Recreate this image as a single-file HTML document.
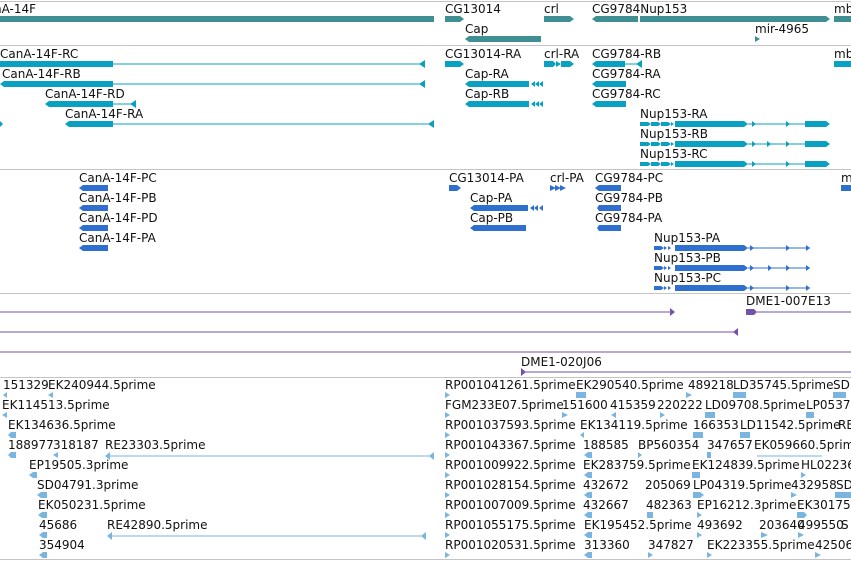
<!DOCTYPE html>
<html><head><meta charset="utf-8"><style>
html,body{margin:0;padding:0;background:#fff;width:851px;height:561px;overflow:hidden}
svg{display:block}
text{font-family:"DejaVu Sans","Liberation Sans",sans-serif;font-size:12px;fill:#111}
</style></head><body>
<svg width="851" height="561" viewBox="0 0 851 561" xmlns="http://www.w3.org/2000/svg">
<g stroke="#c4c4c4" stroke-width="1">
<line x1="0" y1="1.5" x2="851" y2="1.5"/><line x1="0" y1="45.5" x2="851" y2="45.5"/>
<line x1="0" y1="169.5" x2="851" y2="169.5"/><line x1="0" y1="293.5" x2="851" y2="293.5"/>
<line x1="0" y1="377.5" x2="851" y2="377.5"/><line x1="0" y1="559.5" x2="851" y2="559.5"/>
</g>
<!-- Track 1 genes -->
<g fill="#3f8f93">
<rect x="0" y="16" width="434" height="6"/>
<polygon points="445,16 460,16 464,19 460,22 445,22"/>
<polygon points="544,16 570,16 574,19 570,22 544,22"/>
<polygon points="596,16 638,16 638,22 596,22 592,19"/>
<polygon points="640,16 826,16 830,19 826,22 640,22"/>
<rect x="834" y="16" width="17" height="6"/>
<polygon points="469,36 541,36 541,42 469,42 465,39"/>
<polygon points="755,36 760,39 755,42"/>
</g>
<text x="-6" y="13">nA-14F</text><text x="445" y="13">CG13014</text><text x="544" y="13">crl</text>
<text x="592" y="13">CG9784Nup153</text><text x="834" y="13">mb</text>
<text x="465" y="33">Cap</text><text x="755" y="33">mir-4965</text>
<!-- Track 2 -->
<g fill="#0aa0c1" stroke="none">
<rect x="0" y="61" width="113" height="6"/><rect x="113" y="63.5" width="312" height="1"/><polygon points="425,60 425,68 419,64"/>
<polygon points="4,81 113,81 113,87 4,87 0,84"/><rect x="113" y="83.5" width="312" height="1"/><polygon points="425,80 425,88 419,84"/>
<polygon points="49,101 113,101 113,107 49,107 45,104"/><rect x="113" y="103.5" width="22" height="1"/><polygon points="136,100 136,108 130,104"/>
<polygon points="69,121 113,121 113,127 69,127 65,124"/><rect x="113" y="123.5" width="321" height="1"/><polygon points="434,120 434,128 428,124"/>
<polygon points="0,121 3,124 0,127"/>
<polygon points="445,61 460,61 464,64 460,67 445,67"/>
<polygon points="544,61 553,61 556,64 553,67 544,67"/><polygon points="556,61 561,64 556,67"/><polygon points="561,61 570,61 574,64 570,67 561,67"/>
<polygon points="596,61 625,61 625,67 596,67 592,64"/><rect x="625" y="63.5" width="16" height="1"/><polygon points="642,60 642,68 636,64"/>
<rect x="834" y="61" width="17" height="6"/>
<polygon points="469,81 529,81 529,87 469,87 465,84"/><polygon points="535,81 535,87 531,84"/><polygon points="539,81 539,87 535,84"/><polygon points="543,81 543,87 539,84"/>
<polygon points="469,101 529,101 529,107 469,107 465,104"/><polygon points="535,101 535,107 531,104"/><polygon points="539,101 539,107 535,104"/><polygon points="543,101 543,107 539,104"/>
<polygon points="596,81 626,81 626,87 596,87 592,84"/>
<polygon points="596,101 626,101 626,107 596,107 592,104"/>
</g>
<g fill="#0aa0c1">
<g id="nup">
<polygon points="640,122 648,122 651,124 648,126 640,126"/><polygon points="651,122 658,122 661,124 658,126 651,126"/><polygon points="661,122 668,122 671,124 668,126 661,126"/><polygon points="671,122 674,124 671,126"/>
<polygon points="675,121 744,121 748,124 744,127 675,127"/><rect x="748" y="123.5" width="57" height="1"/><polygon points="752,121 756,124 752,127"/><polygon points="786,121 790,124 786,127"/>
<polygon points="805,121 826,121 830,124 826,127 805,127"/>
</g>
<use href="#nup" y="20"/><use href="#nup" y="40"/>
<polygon points="767,141 771,144 767,147"/>
</g>
<text x="0" y="58">CanA-14F-RC</text><text x="445" y="58">CG13014-RA</text><text x="544" y="58">crl-RA</text><text x="592" y="58">CG9784-RB</text><text x="834" y="58">mb</text>
<text x="2" y="78">CanA-14F-RB</text><text x="465" y="78">Cap-RA</text><text x="592" y="78">CG9784-RA</text>
<text x="45" y="98">CanA-14F-RD</text><text x="465" y="98">Cap-RB</text><text x="592" y="98">CG9784-RC</text>
<text x="65" y="118">CanA-14F-RA</text><text x="640" y="118">Nup153-RA</text>
<text x="640" y="138">Nup153-RB</text><text x="640" y="158">Nup153-RC</text>
<!-- Track 3 -->
<g fill="#2f6fcf">
<polygon points="83,185 108,185 108,191 83,191 79,188"/>
<polygon points="83,205 108,205 108,211 83,211 79,208"/>
<polygon points="83,225 108,225 108,231 83,231 79,228"/>
<polygon points="83,245 108,245 108,251 83,251 79,248"/>
<polygon points="449,185 457,185 461,188 457,191 449,191"/>
<polygon points="550,185 556,188 550,191"/><polygon points="555,185 561,188 555,191"/><polygon points="560,185 566,188 560,191"/>
<polygon points="599,185 621,185 621,191 599,191 595,188"/>
<polygon points="599,205 621,205 621,211 599,211 597,208"/>
<polygon points="599,225 621,225 621,231 599,231 597,228"/>
<polygon points="474,205 528,205 528,211 474,211 470,208"/><polygon points="534,205 534,211 530,208"/><polygon points="538,205 538,211 534,208"/><polygon points="543,205 543,211 539,208"/>
<polygon points="474,225 526,225 526,231 474,231 470,228"/>
<g id="nupp">
<polygon points="654,246 661,246 664,248 661,250 654,250"/><polygon points="664,246 667,248 664,250"/><polygon points="668,246 671,248 668,250"/>
<polygon points="675,245 744,245 748,248 744,251 675,251"/><rect x="748" y="247.5" width="62" height="1"/><polygon points="750,245 754,248 750,251"/><polygon points="786,245 790,248 786,251"/><polygon points="806,245 810,248 806,251"/>
</g>
<use href="#nupp" y="20"/><use href="#nupp" y="40"/>
<polygon points="768,265 772,268 768,271"/>
<rect x="841" y="185" width="10" height="6"/>
</g>
<text x="79" y="182">CanA-14F-PC</text><text x="449" y="182">CG13014-PA</text><text x="550" y="182">crl-PA</text><text x="595" y="182">CG9784-PC</text><text x="841" y="182">m</text>
<text x="79" y="202">CanA-14F-PB</text><text x="470" y="202">Cap-PA</text><text x="595" y="202">CG9784-PB</text>
<text x="79" y="222">CanA-14F-PD</text><text x="470" y="222">Cap-PB</text><text x="595" y="222">CG9784-PA</text>
<text x="79" y="242">CanA-14F-PA</text><text x="654" y="242">Nup153-PA</text>
<text x="654" y="262">Nup153-PB</text><text x="654" y="282">Nup153-PC</text>
<!-- Purple track -->
<g fill="#7452aa">
<rect x="0" y="311.5" width="674" height="1"/><polygon points="670,308 675,312 670,316"/>
<polygon points="746,309 754,309 757,312 754,315 746,315"/><rect x="757" y="311.5" width="94" height="1"/>
<rect x="0" y="331.5" width="738" height="1"/><polygon points="738,328 738,336 733,332"/>
<rect x="0" y="351.5" width="851" height="1"/>
<rect x="521" y="371.5" width="330" height="1"/><polygon points="521,368 526,372 521,376"/>
</g>
<text x="746" y="305">DME1-007E13</text><text x="521" y="366">DME1-020J06</text>
<!-- Bottom EST track -->
<g fill="#7ab5df">
<rect x="107" y="455.5" width="327" height="1"/><polygon points="110,452 110,460 105,456"/><polygon points="434,452 434,460 429,456"/>
<rect x="109" y="535.5" width="317" height="1"/><polygon points="112,532 112,540 107,536"/><polygon points="426,532 426,540 421,536"/>
<rect x="757" y="455.5" width="65" height="1"/>
<polygon points="7,392 7,398 3,395"/><polygon points="53,392 53,398 48,395"/>
<polygon points="7,412 7,418 2,415"/>
<polygon points="11,432 16,432 16,438 11,438 8,435"/>
<polygon points="11,452 16,452 16,458 11,458 8,455"/><polygon points="58,452 58,458 53,455"/>
<polygon points="33,472 37,472 37,478 33,478 29,475"/>
<polygon points="41,492 47,492 47,498 41,498 37,495"/>
<polygon points="42,512 47,512 47,518 42,518 38,515"/>
<polygon points="43,532 47,532 47,538 43,538 39,535"/>
<polygon points="43,552 47,552 47,558 43,558 39,555"/>
<g id="rp"><polygon points="445,392 450,395 445,398"/></g>
<use href="#rp" y="20"/><use href="#rp" y="40"/><use href="#rp" y="60"/><use href="#rp" y="80"/><use href="#rp" y="100"/><use href="#rp" y="120"/><use href="#rp" y="140"/><use href="#rp" y="160"/>
<polygon points="576,392 586,392 586,398 576,398"/><polygon points="686,392 692,395 686,398"/><polygon points="733,392 746,392 746,398 733,398"/><polygon points="833,392 846,392 846,398 833,398"/>
<polygon points="562,412 568,415 562,418"/><polygon points="616,412 616,418 611,415"/><polygon points="660,412 665,415 660,418"/><polygon points="705,412 715,412 715,418 705,418"/><polygon points="806,412 814,412 814,418 806,418"/>
<polygon points="584,432 584,438 580,435"/><polygon points="693,432 703,432 703,438 693,438"/><polygon points="740,432 750,432 750,438 740,438"/>
<polygon points="588,452 592,452 592,458 588,458 584,455"/><polygon points="638,452 642,455 638,458"/><polygon points="707,452 711,452 711,458 707,458"/>
<polygon points="588,472 592,472 592,478 588,478 584,475"/><polygon points="692,472 700,472 700,478 692,478"/><polygon points="801,472 806,475 801,478"/>
<polygon points="588,492 592,492 592,498 588,498 584,495"/><polygon points="693,492 700,492 704,495 700,498 693,498"/><polygon points="791,492 797,495 791,498"/><polygon points="835,492 851,492 851,498 835,498"/>
<polygon points="588,512 592,512 592,518 588,518 584,515"/><polygon points="647,512 653,512 653,518 647,518"/><polygon points="697,512 702,515 697,518"/><polygon points="797,512 804,512 807,515 804,518 797,518"/>
<polygon points="588,532 592,532 592,538 588,538 584,535"/><polygon points="697,532 702,535 697,538"/><polygon points="761,532 768,535 761,538"/><polygon points="798,532 804,535 798,538"/>
<polygon points="588,552 592,552 592,558 588,558 584,555"/><polygon points="648,552 653,555 648,558"/><polygon points="707,552 712,555 707,558"/><polygon points="815,552 821,555 815,558"/>
</g>
<g>
<text x="3" y="389">151329</text><text x="48" y="389">EK240944.5prime</text>
<text x="445" y="389">RP001041261.5prime</text><text x="576" y="389">EK290540.5prime</text><text x="688" y="389">489218</text><text x="733" y="389">LD35745.5prime</text><text x="833" y="389">SD1</text>
<text x="2" y="409">EK114513.5prime</text>
<text x="445" y="409">FGM233E07.5prime</text><text x="562" y="409">151600</text><text x="610" y="409">415359</text><text x="657" y="409">220222</text><text x="705" y="409">LD09708.5prime</text><text x="806" y="409">LP0537</text>
<text x="8" y="429">EK134636.5prime</text>
<text x="445" y="429">RP001037593.5prime</text><text x="580" y="429">EK134119.5prime</text><text x="693" y="429">166353</text><text x="740" y="429">LD11542.5prime</text><text x="838" y="429">RE</text>
<text x="8" y="449">188977</text><text x="53" y="449">318187</text><text x="105" y="449">RE23303.5prime</text>
<text x="445" y="449">RP001043367.5prime</text><text x="583" y="449">188585</text><text x="638" y="449">BP560354</text><text x="707" y="449">347657</text><text x="754" y="449">EK059660.5prim</text>
<text x="29" y="469">EP19505.3prime</text>
<text x="445" y="469">RP001009922.5prime</text><text x="583" y="469">EK283759.5prime</text><text x="692" y="469">EK124839.5prime</text><text x="801" y="469">HL02236</text>
<text x="37" y="489">SD04791.3prime</text>
<text x="445" y="489">RP001028154.5prime</text><text x="583" y="489">432672</text><text x="645" y="489">205069</text><text x="693" y="489">LP04319.5prime</text><text x="791" y="489">432958</text><text x="836" y="489">SD</text>
<text x="38" y="509">EK050231.5prime</text>
<text x="445" y="509">RP001007009.5prime</text><text x="583" y="509">432667</text><text x="646" y="509">482363</text><text x="697" y="509">EP16212.3prime</text><text x="797" y="509">EK30175</text>
<text x="39" y="529">45686</text><text x="107" y="529">RE42890.5prime</text>
<text x="445" y="529">RP001055175.5prime</text><text x="584" y="529">EK195452.5prime</text><text x="697" y="529">493692</text><text x="759" y="529">203640</text><text x="798" y="529">499550</text><text x="841" y="529">S</text>
<text x="39" y="549">354904</text>
<text x="445" y="549">RP001020531.5prime</text><text x="584" y="549">313360</text><text x="648" y="549">347827</text><text x="707" y="549">EK223355.5prime</text><text x="815" y="549">42506</text>
</g>
</svg>
</body></html>
